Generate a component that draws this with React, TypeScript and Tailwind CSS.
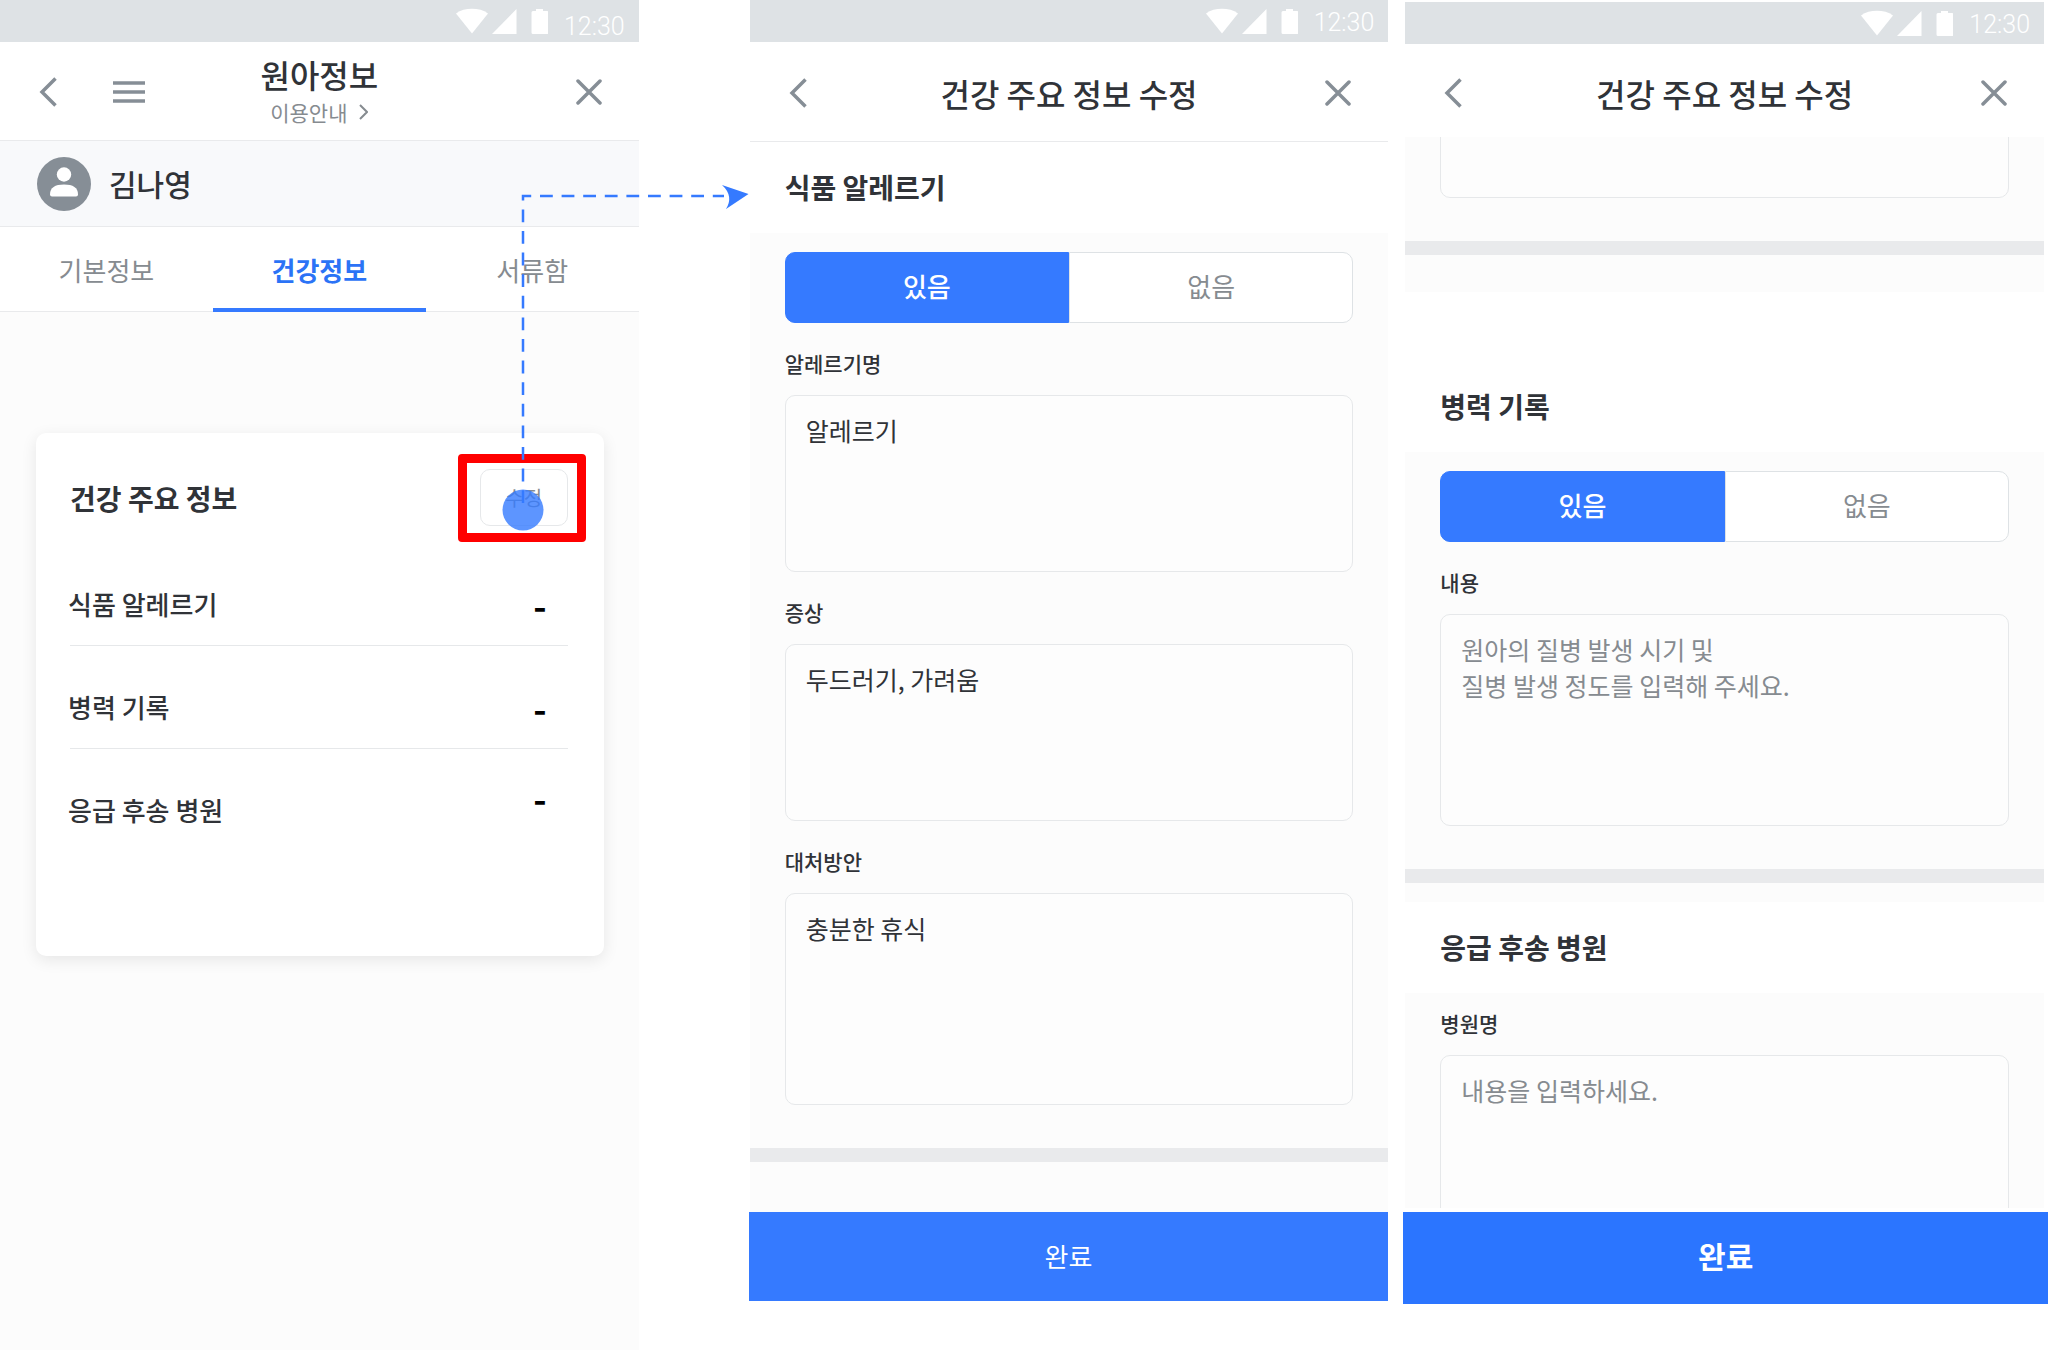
import { useState } from 'react'
import type { ReactNode } from 'react'
import clsx from 'clsx'

type StatusBarProps = {
  lowClock?: boolean
}

function StatusBar({ lowClock }: StatusBarProps) {
  return (
    <div className="flex h-[42px] shrink-0 items-start justify-end bg-[#dee2e5] pr-[14px] text-white">
      <svg
        className="mt-2 h-[26px] w-[92px]"
        viewBox="0 0 92 26"
        fill="currentColor"
        aria-hidden="true"
      >
        <path d="M0 5.5C4.5 2 10 .7 16 .7S27.500 2 32 5.500L16 25.500Z" />
        <path d="M60.500 1V26H36Z" />
        <path d="M80 1h7v2h4q1.500 0 1.500 1.500v20q0 1.500-1.500 1.500h-14q-1.500 0-1.500-1.500v-20Q75.500 3 77 3h3Z" />
      </svg>
      <span
        className={clsx(
          'ml-4 font-[Roboto,sans-serif] text-[25px] leading-7 font-light',
          lowClock ? 'mt-[13px]' : 'mt-[9px]',
        )}
      >
        12:30
      </span>
    </div>
  )
}

function BackButton() {
  return (
    <button type="button" aria-label="뒤로">
      <svg
        className="h-[30px] w-[18px]"
        viewBox="0 0 18 30"
        fill="none"
        stroke="#868e96"
        strokeWidth="3.5"
      >
        <path d="M16.500 1.500 3 15l13.500 13.500" />
      </svg>
    </button>
  )
}

function CloseButton() {
  return (
    <button type="button" aria-label="닫기" className="justify-self-end">
      <svg
        className="h-[26px] w-[26px]"
        viewBox="0 0 26 26"
        fill="none"
        stroke="#868e96"
        strokeWidth="3.5"
        strokeLinecap="round"
      >
        <path d="M2 2l22 22M24 2l-22 22" />
      </svg>
    </button>
  )
}

function Header({
  left,
  children,
  className,
}: {
  left?: ReactNode
  children: ReactNode
  className: string
}) {
  return (
    <header
      className={clsx(
        'grid shrink-0 grid-cols-[1fr_auto_1fr] items-center bg-white px-[37px]',
        className,
      )}
    >
      <div className="flex items-center gap-14 pl-0.5">
        <BackButton />
        {left}
      </div>
      {children}
      <CloseButton />
    </header>
  )
}

function FormTitle() {
  return (
    <h1 className="text-[32px] leading-10 font-medium">건강 주요 정보 수정</h1>
  )
}

function SectionTitle({ children }: { children: ReactNode }) {
  return (
    <h2 className="flex h-[91px] items-center bg-white px-[35px] pb-0.5 text-[28px] leading-10 font-bold">
      {children}
    </h2>
  )
}

function Segment({ label }: { label: string }) {
  const [has, setHas] = useState(true)

  return (
    <div
      role="group"
      aria-label={label}
      className="mb-6 flex h-[71px] text-[26px] leading-10"
    >
      {[true, false].map((value) => (
        <button
          key={String(value)}
          type="button"
          aria-pressed={has === value}
          onClick={() => setHas(value)}
          className={clsx(
            'flex-1 border pb-1',
            value ? 'rounded-l-[10px]' : 'rounded-r-[10px]',
            has === value
              ? 'border-[#357aff] bg-[#357aff] font-medium text-white'
              : 'border-[#dee2e5] bg-white text-[#868b90]',
          )}
        >
          {value ? '있음' : '없음'}
        </button>
      ))}
    </div>
  )
}

type FieldProps = {
  id: string
  label: string
  value?: string
  placeholder?: string
  tall?: boolean
}

const areaClass =
  'block w-full resize-none rounded-[10px] border border-[#e6e8ea] bg-[#fdfdfd] px-5 py-4 text-[25px] leading-9 placeholder:text-[#868b90] placeholder:opacity-100'

function Field({ id, label, value, placeholder, tall }: FieldProps) {
  return (
    <div>
      <label
        htmlFor={id}
        className="mb-4 block text-[21px] leading-8 font-medium"
      >
        {label}
      </label>
      <textarea
        id={id}
        defaultValue={value}
        placeholder={placeholder}
        className={clsx(areaClass, tall ? 'h-[212px]' : 'h-[177px]')}
      />
    </div>
  )
}

function Divider() {
  return <div className="h-[14px] shrink-0 bg-[#e9eaec]" />
}

const tabs = ['기본정보', '건강정보', '서류함']

const healthItems = ['식품 알레르기', '병력 기록', '응급 후송 병원']

function ChildInfoScreen() {
  const [tab, setTab] = useState('건강정보')

  return (
    <section className="relative mr-[111px] flex flex-1 flex-col">
      <StatusBar lowClock />
      <Header
        className="h-[99px] border-b border-[#e9eaec] pt-0.5"
        left={
          <button type="button" aria-label="메뉴">
            <svg
              className="h-6 w-8"
              viewBox="0 0 32 24"
              stroke="#868e96"
              strokeWidth="3.5"
            >
              <path d="M0 3h32M0 12h32M0 21h32" />
            </svg>
          </button>
        }
      >
        <div className="flex flex-col items-center gap-1 pb-1">
          <h1 className="text-[32px] leading-10 font-medium">원아정보</h1>
          <a
            href="#guide"
            className="flex items-center gap-3 text-[21px] leading-7 text-[#868b90]"
          >
            이용안내
            <svg
              className="h-4 w-[9px]"
              viewBox="0 0 9 16"
              fill="none"
              stroke="currentColor"
              strokeWidth="2"
            >
              <path d="M1 1l7 7-7 7" />
            </svg>
          </a>
        </div>
      </Header>

      <div className="flex h-[86px] items-center gap-[18px] border-b border-[#e9eaec] bg-[#f8f9fb] pl-[37px]">
        <svg className="h-[54px] w-[54px]" viewBox="0 0 54 54">
          <circle cx="27" cy="27" r="27" fill="#868e96" />
          <circle cx="27" cy="17.500" r="7.200" fill="#fff" />
          <path
            d="M13 37.500C13 30.500 18 27.500 27 27.500S41 30.500 41 37.500Q41 39.500 39 39.500H15Q13 39.500 13 37.500Z"
            fill="#fff"
          />
        </svg>
        <span className="pb-0.5 text-[30px] leading-10 font-medium">
          김나영
        </span>
      </div>

      <nav className="grid h-[85px] grid-cols-3 border-b border-[#e9eaec] bg-white">
        {tabs.map((name) => (
          <button
            key={name}
            type="button"
            onClick={() => setTab(name)}
            className={clsx(
              '-mb-px border-b-4 pt-1 text-[26px] leading-10',
              tab === name
                ? 'border-[#357aff] font-bold text-[#2b73f6]'
                : 'border-transparent text-[#868b90]',
            )}
          >
            {name}
          </button>
        ))}
      </nav>

      <div className="flex-1 bg-[#fcfcfc] pt-[121px] pr-[35px] pl-9">
        <div className="rounded-[10px] bg-white pt-9 pr-9 pb-[105px] pl-8 shadow-[0_4px_16px_rgba(0,0,0,0.09)]">
          <div className="mb-[17px] flex items-center justify-between pl-0.5">
            <h2 className="text-[28px] leading-10 font-bold">건강 주요 정보</h2>
            <div className="relative">
              <button
                type="button"
                className="h-[57px] w-[88px] rounded-[10px] border border-[#e6e8ea] text-[20px] leading-7 text-[#868b90]"
              >
                수정
              </button>
              {/* Marks the button that opens the form */}
              <div className="pointer-events-none absolute -top-[15px] -right-[18px] -bottom-4 -left-[22px] rounded-[4px] border-[9px] border-[#ff0000]" />
            </div>
          </div>

          <dl>
            {healthItems.map((item, i) => {
              const last = i === healthItems.length - 1
              return (
                <div key={item}>
                  <div className="flex h-[102px] items-center justify-between pt-5 pr-[21px]">
                    <dt className="text-[26px] leading-10 font-medium">
                      {item}
                    </dt>
                    <dd
                      className={clsx(
                        'text-[36px] leading-[56px] font-bold text-black',
                        last && 'self-start',
                      )}
                    >
                      -
                    </dd>
                  </div>
                  {!last && <hr className="ml-0.5 border-[#e6e8ea]" />}
                </div>
              )
            })}
          </dl>
        </div>
      </div>

      {/* Flow line from the edit button to the form screen */}
      <svg
        className="pointer-events-none absolute top-[180px] -right-[111px] z-10 h-[360px] w-[252px]"
        viewBox="0 0 252 360"
        fill="none"
      >
        <path
          d="M25 323V16H226"
          stroke="#357aff"
          strokeWidth="2.500"
          strokeDasharray="12.800 8.800"
        />
        <path d="M250.500 14 224 5Q236 16 228 29Z" fill="#357aff" />
        <circle cx="25" cy="330" r="20.500" fill="#357aff" opacity="0.8" />
      </svg>
    </section>
  )
}

function AllergyFormScreen() {
  return (
    <section className="mr-[17px] flex flex-1 flex-col">
      <StatusBar />
      <Header className="h-[100px] border-b border-[#e9eaec] pt-0.5">
        <FormTitle />
      </Header>

      <div className="bg-[#fcfcfc]">
        <SectionTitle>식품 알레르기</SectionTitle>
        <div className="px-[35px] pt-[19px] pb-[43px]">
          <Segment label="식품 알레르기" />
          <div className="flex flex-col gap-6">
            <Field id="allergy-name" label="알레르기명" value="알레르기" />
            <Field id="symptom" label="증상" value="두드러기, 가려움" />
            <Field id="remedy" label="대처방안" value="충분한 휴식" tall />
          </div>
        </div>
        <Divider />
        <div className="h-[50px]" />
      </div>
      <button
        type="button"
        className="-ml-px h-[89px] bg-[#357aff] pb-0.5 text-[26px] leading-10 text-white"
      >
        완료
      </button>
    </section>
  )
}

function HistoryFormScreen() {
  return (
    <section className="mr-1 flex flex-1 flex-col pt-0.5 pb-[46px]">
      <StatusBar />
      <Header className="h-[93px] pt-1">
        <FormTitle />
      </Header>

      <div className="min-h-0 flex-1 overflow-hidden bg-[#fcfcfc]">
        {/* Tail of the previous section, scrolled under the header */}
        <div className="flex h-[61px] flex-col justify-end overflow-hidden px-[35px]">
          <textarea
            aria-label="대처방안"
            className={clsx(areaClass, 'h-[212px] shrink-0')}
          />
        </div>
        <div className="h-[43px]" />
        <Divider />

        <div className="mt-[37px] bg-white pt-[69px]">
          <SectionTitle>병력 기록</SectionTitle>
        </div>
        <div className="px-[35px] pt-[19px] pb-[43px]">
          <Segment label="병력 기록" />
          <Field
            id="history"
            label="내용"
            placeholder={'원아의 질병 발생 시기 및\n질병 발생 정도를 입력해 주세요.'}
            tall
          />
        </div>
        <Divider />

        <div className="pt-[19px]">
          <SectionTitle>응급 후송 병원</SectionTitle>
        </div>
        <div className="px-[35px] pt-[14px]">
          <Field
            id="hospital"
            label="병원명"
            placeholder="내용을 입력하세요."
            tall
          />
        </div>
      </div>
      <button
        type="button"
        className="mt-1 -mr-1 -ml-0.5 h-[92px] shrink-0 bg-[#2b75ff] pb-1.5 text-[30px] leading-10 font-bold text-white"
      >
        완료
      </button>
    </section>
  )
}

export default function App() {
  return (
    <main className="flex h-screen overflow-hidden bg-white font-['Noto_Sans_CJK_KR','Noto_Sans',sans-serif] text-[#303338]">
      <ChildInfoScreen />
      <AllergyFormScreen />
      <HistoryFormScreen />
    </main>
  )
}
